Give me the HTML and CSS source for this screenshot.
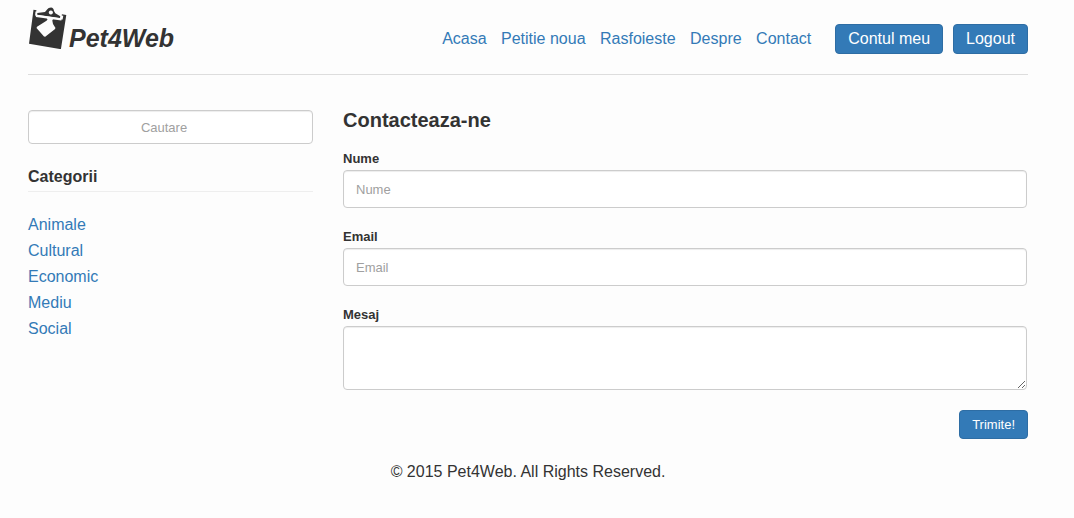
FILE: index.html
```html
<!DOCTYPE html>
<html lang="ro">
<head>
<meta charset="utf-8">
<meta name="viewport" content="width=device-width, initial-scale=1">
<title>Pet4Web - Contact</title>
<link rel="stylesheet" href="styles.css">
</head>
<body>
<div class="page">
  <header class="header">
    <div class="brand">
      <svg class="brand-icon" viewBox="28 5 41 44" width="41" height="44" aria-hidden="true">
        <path fill="#333" d="M33.500 9.700 36.500 10.200 36.200 11.500 35.500 11.400 35 16.200 62.500 20 63.300 15.800 61.700 15.400 61.900 14.300 66.300 15 60.900 49.200 29 43.700z"/>
        <path fill="#333" d="M34.500 15.500 63.500 19.800 62 27 33 24z"/>
        <path fill="#333" fill-rule="evenodd" d="M37.300 13.100 45 12 47.300 9.200Q48.300 7.500 51 7.500 53.600 7.800 54 11L55.300 13.300 60.300 16.300 60 18 37.200 14.700zM50.800 10.400a2.100 2.100 0 1 0 .1 0z"/>
        <path fill="none" stroke="#fdfdfd" stroke-width="2.200" d="M36 15.900 61.500 19.500"/>
        <path fill="#fdfdfd" d="M46.500 17.500 53.300 18.500 52.300 20.500 53 24 55.500 28 54.800 29.300 45.200 36.800 44 36.500 36.500 28 37 26.700 46.500 20.800 47.500 19.500z"/>
      </svg>
      <h1 class="brand-name">Pet4Web</h1>
    </div>
    <nav class="nav">
      <div>
        <a class="nav-link" href="#">Acasa</a>
        <a class="nav-link" href="#">Petitie noua</a>
        <a class="nav-link" href="#">Rasfoieste</a>
        <a class="nav-link" href="#">Despre</a>
        <a class="nav-link" href="#">Contact</a>
      </div>
      <div class="account">
        <button class="button" type="button">Contul meu</button>
        <button class="button" type="button">Logout</button>
      </div>
    </nav>
  </header>
  <div class="content">
    <aside class="sidebar">
      <input class="input search" type="search" placeholder="Cautare" aria-label="Cautare">
      <h2 class="sidebar-title">Categorii</h2>
      <ul class="categories">
        <li><a href="#">Animale</a></li>
        <li><a href="#">Cultural</a></li>
        <li><a href="#">Economic</a></li>
        <li><a href="#">Mediu</a></li>
        <li><a href="#">Social</a></li>
      </ul>
    </aside>
    <main>
      <h2 class="title">Contacteaza-ne</h2>
      <form class="form">
        <div class="field">
          <label for="name">Nume</label>
          <input class="input" id="name" type="text" placeholder="Nume">
        </div>
        <div class="field">
          <label for="email">Email</label>
          <input class="input" id="email" type="email" placeholder="Email">
        </div>
        <div class="field">
          <label for="message">Mesaj</label>
          <textarea class="input message" id="message"></textarea>
        </div>
        <button class="button submit" type="submit">Trimite!</button>
      </form>
    </main>
  </div>
  <footer class="footer">© 2015 Pet4Web. All Rights Reserved.</footer>
</div>
</body>
</html>
```
FILE: styles.css
```css
* {
  box-sizing: border-box;
}

body {
  margin: 0;
  background: #fdfdfd;
  color: #333;
  font: 16px/26px "Liberation Sans", Arial, sans-serif;
}

h1, h2, ul {
  margin: 0;
  padding: 0;
}

a {
  color: #337ab7;
  text-decoration: none;
}

.page {
  padding: 4px 46px 32px 28px;
}

.header {
  display: flex;
  justify-content: space-between;
  align-items: center;
  flex-wrap: wrap;
  padding-bottom: 20px;
  border-bottom: 1px solid #ddd;
}

.brand {
  display: flex;
  align-items: flex-end;
  padding: 1px 0;
}

.brand-icon {
  display: block;
  margin-bottom: 4px;
}

.brand-name {
  font-size: 25px;
  line-height: 30px;
  font-style: italic;
}

.nav {
  display: flex;
  align-items: center;
  flex-wrap: wrap;
  gap: 19px;
  padding-top: 20px;
}

.nav-link {
  margin: 0 5px;
}

.account {
  display: flex;
  gap: 10px;
}

.button {
  padding: 0 12px;
  border: 1px solid #2e6da4;
  border-radius: 4px;
  background: #337ab7;
  color: #fff;
  font: 16px/28px "Liberation Sans", Arial, sans-serif;
  cursor: pointer;
}

.content {
  display: grid;
  grid-template-columns: 285px minmax(0, 1fr);
  gap: 30px;
  padding-top: 32px;
}

.input {
  display: block;
  width: 100%;
  height: 38px;
  margin: 0;
  padding: 6px 12px;
  border: 1px solid #ccc;
  border-radius: 4px;
  background: #fff;
  box-shadow: inset 0 1px 1px rgba(0, 0, 0, 0.075);
  color: #555;
  font: 13px/20px "Liberation Sans", Arial, sans-serif;
}

.input::placeholder {
  color: #a0a0a0;
}

.search {
  height: 34px;
  text-align: center;
}

.sidebar {
  padding-top: 3px;
}

.sidebar-title {
  margin-top: 20px;
  padding-bottom: 1px;
  border-bottom: 1px solid #eee;
  font-size: 16px;
}

.categories {
  margin-top: 20px;
  list-style: none;
}

.title {
  margin-bottom: 17px;
  font-size: 20px;
}

.form {
  display: flex;
  flex-direction: column;
  gap: 20px;
}

.field {
  margin-right: 1px;
}

.field label {
  display: block;
  padding-bottom: 2px;
  font-size: 13px;
  line-height: 18px;
  font-weight: bold;
}

.message {
  height: 64px;
  resize: vertical;
}

.submit {
  align-self: flex-end;
  font-size: 13px;
  line-height: 27px;
}

.footer {
  padding-top: 20px;
  text-align: center;
}
```
